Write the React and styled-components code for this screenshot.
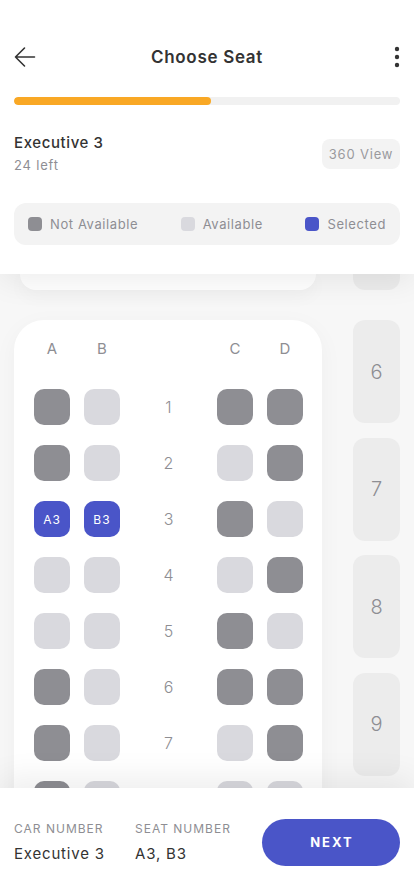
import React from "react";
import styled, { createGlobalStyle } from "styled-components";

const GlobalStyle = createGlobalStyle`
  * { box-sizing: border-box; }
  body {
    margin: 0;
    font-family: Inter, "Noto Sans", sans-serif;
    background: #fff;
  }
`;

const Screen = styled.div`
  width: 414px;
  height: 896px;
  display: flex;
  flex-direction: column;
  overflow: hidden;
  background: #f7f7f7;
`;

const Header = styled.header`
  position: relative;
  z-index: 2;
  flex: none;
  background: #fff;
  padding: 36px 14px 29px;
  box-shadow: 0 8px 28px rgba(0, 0, 0, 0.07);
`;

const TopBar = styled.div`
  height: 42px;
  display: flex;
  align-items: center;
  justify-content: space-between;
`;

const IconButton = styled.button`
  width: 24px;
  height: 24px;
  padding: 0;
  border: none;
  background: none;
  display: flex;
  align-items: center;
  justify-content: ${(p) => (p.$end ? "flex-end" : "flex-start")};
`;

const Title = styled.h1`
  margin: 0;
  font-size: 17px;
  font-weight: 600;
  letter-spacing: 0.7px;
  color: #333;
`;

const Track = styled.div`
  margin-top: 19px;
  height: 8px;
  border-radius: 4px;
  background: #f1f1f1;
  overflow: hidden;
`;

const Fill = styled.div`
  height: 100%;
  border-radius: 4px;
  background: #f9a825;
`;

const InfoRow = styled.div`
  margin-top: 28px;
  display: flex;
  align-items: center;
  justify-content: space-between;
`;

const CarName = styled.div`
  font-size: 15px;
  line-height: 20px;
  font-weight: 500;
  letter-spacing: 0.6px;
  color: #333;
`;

const Left = styled.div`
  margin-top: 3px;
  font-size: 13px;
  line-height: 18px;
  letter-spacing: 0.8px;
  color: #8e8e93;
`;

const ViewButton = styled.button`
  height: 30px;
  width: 78px;
  border: none;
  border-radius: 8px;
  background: #f3f3f3;
  font-family: inherit;
  font-size: 13px;
  letter-spacing: 0.8px;
  color: #9a9a9e;
`;

const Legend = styled.div`
  margin-top: 29px;
  height: 42px;
  border-radius: 12px;
  background: #f3f3f3;
  padding: 0 14px;
  display: flex;
  align-items: center;
  justify-content: space-between;
`;

const LegendItem = styled.div`
  display: flex;
  align-items: center;
  gap: 8px;
  font-size: 13px;
  letter-spacing: 0.6px;
  color: #8e8e93;
`;

const Swatch = styled.span`
  width: 14px;
  height: 14px;
  border-radius: 4px;
  background: ${(p) => p.$color};
`;

const Scroller = styled.main`
  flex: 1;
  min-height: 0;
  overflow: hidden;
  padding: 0 14px;
  display: flex;
  align-items: flex-start;
  gap: 31px;
`;

const CardColumn = styled.div`
  flex: 1;
  display: flex;
  flex-direction: column;
  gap: 30px;
`;

const CardStub = styled.div`
  flex: none;
  height: 16px;
  margin: 0 6px;
  border-radius: 0 0 24px 24px;
  background: #fff;
  box-shadow: 0 6px 18px rgba(0, 0, 0, 0.04);
`;

const Card = styled.section`
  flex: none;
  background: #fff;
  border-radius: 30px;
  padding: 20px 19px 20px 20px;
  box-shadow: 0 6px 24px rgba(0, 0, 0, 0.04);
`;

const SeatGrid = styled.div`
  display: grid;
  grid-template-columns: 36px 36px 1fr 36px 36px;
  column-gap: 14px;
  row-gap: 20px;
`;

const ColHead = styled.div`
  height: 18px;
  margin-bottom: 11px;
  text-align: center;
  font-size: 15px;
  line-height: 18px;
  color: #8e8e93;
`;

const Seat = styled.div`
  width: 36px;
  height: 36px;
  border-radius: 10px;
  display: flex;
  align-items: center;
  justify-content: center;
  font-size: 12px;
  letter-spacing: 1px;
  color: #fff;
  background: ${(p) =>
    p.$state === "taken" ? "#8e8e93" : p.$state === "picked" ? "#4a55c8" : "#d9d9de"};
`;

const RowNum = styled.div`
  display: flex;
  align-items: center;
  justify-content: center;
  font-size: 16px;
  font-weight: 300;
  color: #8e8e93;
`;

const CarColumn = styled.div`
  width: 47px;
  flex: none;
  display: flex;
  flex-direction: column;
  gap: 14.5px;
`;

const CarPill = styled.div`
  flex: none;
  height: ${(p) => (p.$stub ? "16px" : "103px")};
  margin-bottom: ${(p) => (p.$stub ? "15.5px" : "0")};
  border-radius: ${(p) => (p.$stub ? "0 0 12px 12px" : "12px")};
  background: #ececec;
  display: flex;
  align-items: center;
  justify-content: center;
  font-size: 20px;
  font-weight: 300;
  color: #8e8e93;
`;

const Footer = styled.footer`
  position: relative;
  z-index: 2;
  height: 108px;
  flex: none;
  background: #fff;
  padding: 0 14px;
  display: flex;
  align-items: center;
  box-shadow: 0 -10px 30px rgba(0, 0, 0, 0.07);
`;

const Summary = styled.div`
  flex: none;
  width: ${(p) => p.$w}px;
  white-space: nowrap;
`;

const SummaryLabel = styled.div`
  font-size: 12px;
  line-height: 16px;
  letter-spacing: 1px;
  text-transform: uppercase;
  color: #8e8e93;
`;

const SummaryValue = styled.div`
  margin-top: 7px;
  font-size: 15px;
  line-height: 20px;
  letter-spacing: 0.8px;
  color: #333;
`;

const NextButton = styled.button`
  flex: none;
  margin-left: auto;
  width: 138px;
  height: 47px;
  border: none;
  border-radius: 24px;
  background: #4a55c8;
  color: #fff;
  font-family: inherit;
  font-size: 13px;
  font-weight: 700;
  letter-spacing: 2px;
  text-indent: 2px;
`;

const rows = [
  ["taken", "free", "taken", "taken"],
  ["taken", "free", "free", "taken"],
  ["picked", "picked", "taken", "free"],
  ["free", "free", "free", "taken"],
  ["free", "free", "taken", "free"],
  ["taken", "free", "taken", "taken"],
  ["taken", "free", "free", "taken"],
  ["taken", "free", "free", "free"],
];

const cols = ["A", "B", "C", "D"];

const BackIcon = () => (
  <svg width="22" height="22" viewBox="0 0 22 22" fill="none" stroke="#333" strokeWidth="1.6" strokeLinecap="round" strokeLinejoin="round">
    <path d="M20.5 11H1.5M10.5 2L1.5 11l9 9" />
  </svg>
);

const MoreIcon = () => (
  <svg width="6" height="22" viewBox="0 0 6 22" fill="#333">
    <circle cx="3" cy="3" r="2.2" />
    <circle cx="3" cy="11" r="2.2" />
    <circle cx="3" cy="19" r="2.2" />
  </svg>
);

export default function App() {
  return (
    <Screen>
      <GlobalStyle />
      <Header>
        <TopBar>
          <IconButton>
            <BackIcon />
          </IconButton>
          <Title>Choose Seat</Title>
          <IconButton $end>
            <MoreIcon />
          </IconButton>
        </TopBar>
        <Track>
          <Fill style={{ width: "51%" }} />
        </Track>
        <InfoRow>
          <div>
            <CarName>Executive 3</CarName>
            <Left>24 left</Left>
          </div>
          <ViewButton>360 View</ViewButton>
        </InfoRow>
        <Legend>
          <LegendItem>
            <Swatch $color="#8e8e93" />
            Not Available
          </LegendItem>
          <LegendItem>
            <Swatch $color="#d9d9de" />
            Available
          </LegendItem>
          <LegendItem>
            <Swatch $color="#4a55c8" />
            Selected
          </LegendItem>
        </Legend>
      </Header>

      <Scroller>
        <CardColumn>
          <CardStub />
          <Card>
            <SeatGrid>
              <ColHead>A</ColHead>
              <ColHead>B</ColHead>
              <ColHead />
              <ColHead>C</ColHead>
              <ColHead>D</ColHead>
              {rows.map((row, i) => (
                <React.Fragment key={i}>
                  {row.slice(0, 2).map((s, j) => (
                    <Seat key={j} $state={s}>
                      {s === "picked" ? `${cols[j]}${i + 1}` : ""}
                    </Seat>
                  ))}
                  <RowNum>{i + 1}</RowNum>
                  {row.slice(2).map((s, j) => (
                    <Seat key={j} $state={s}>
                      {s === "picked" ? `${cols[j + 2]}${i + 1}` : ""}
                    </Seat>
                  ))}
                </React.Fragment>
              ))}
            </SeatGrid>
          </Card>
        </CardColumn>
        <CarColumn>
          <CarPill $stub />
          {[6, 7, 8, 9].map((n) => (
            <CarPill key={n}>{n}</CarPill>
          ))}
        </CarColumn>
      </Scroller>

      <Footer>
        <Summary $w={121}>
          <SummaryLabel>Car Number</SummaryLabel>
          <SummaryValue>Executive 3</SummaryValue>
        </Summary>
        <Summary $w={110}>
          <SummaryLabel>Seat Number</SummaryLabel>
          <SummaryValue>A3, B3</SummaryValue>
        </Summary>
        <NextButton>NEXT</NextButton>
      </Footer>
    </Screen>
  );
}
